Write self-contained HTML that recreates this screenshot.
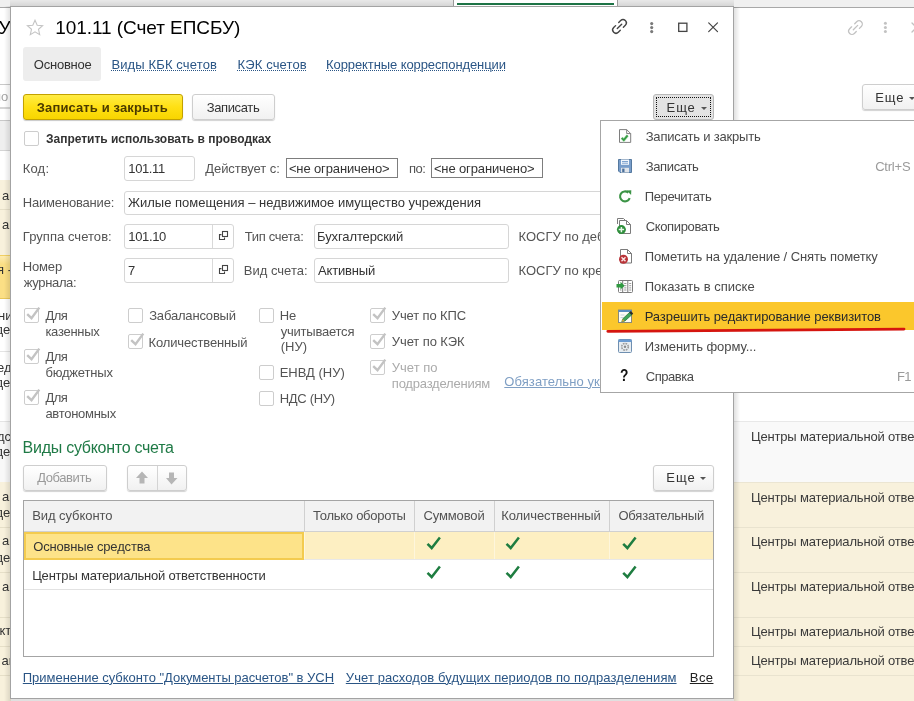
<!DOCTYPE html>
<html lang="ru"><head><meta charset="utf-8"><title>101.11 (Счет ЕПСБУ)</title>
<style>
html,body{margin:0;padding:0}
body{width:914px;height:701px;overflow:hidden;position:relative;background:#fff;font-family:"Liberation Sans",sans-serif;font-size:13px}
div,span{box-sizing:border-box}
.a{position:absolute}
.t{position:absolute;white-space:pre;line-height:1}
.L{position:absolute;left:0;top:0;width:914px;height:701px;will-change:transform}
.dl{text-decoration:underline dotted;text-decoration-thickness:1px;text-underline-offset:1px}
.ul{text-decoration:underline;text-decoration-thickness:1px;text-underline-offset:1px}
.fld{position:absolute;border:1px solid #d6d6d6;border-radius:3px;background:#fff}
.cb{position:absolute;width:15px;height:15px;border:1px solid #cdcdcd;border-radius:2px;background:#fff}
.btn{position:absolute;border:1px solid #cecece;border-radius:3px;background:linear-gradient(#fff,#f1f1f1);box-shadow:0 1px 1px rgba(0,0,0,.18)}
.hl{position:absolute;height:1px;background:#e2e2e2}
</style></head><body>

<!-- ============ background app ============ -->
<div class="a" id="bg" style="left:0;top:0;width:914px;height:701px">
  <!-- top strip -->
  <div class="a" style="left:0;top:0;width:914px;height:7px;background:#f0f0f0"></div>
  <div class="a" style="left:10px;top:0;width:724px;height:6px;background:linear-gradient(rgba(0,0,0,.03),rgba(0,0,0,.11))"></div>
  <div class="a" style="left:453px;top:0;width:165px;height:6px;background:#fff;border-left:1px solid #9a9a9a;border-right:1px solid #9a9a9a"></div>
  <div class="a" style="left:457px;top:3px;width:157px;height:2px;background:#1d7346"></div>
  <div class="a" style="left:0;top:7px;width:914px;height:1px;background:#a8a8a8"></div>
  <!-- left strip -->
  <div class="a" style="left:0;top:84px;width:11px;height:25px;border-top:1px solid #c9c9c9;border-bottom:2px solid #d6d6d6;background:#fff"></div>
  <div class="a" style="left:0;top:120px;width:11px;height:31px;background:#efefef;border-top:1px solid #c8c8c8;border-bottom:1px solid #d4d4d4"></div>
  <div class="a" style="left:0;top:180px;width:11px;height:76px;background:#f8f1dc"></div>
  <div class="a" style="left:0;top:209px;width:11px;height:1px;background:#e6dfc8"></div>
  <div class="a" style="left:0;top:255px;width:11px;height:44px;background:linear-gradient(#fdebb0,#fbdf85 20%,#fbdf85);border-top:1px solid #f1cf62;border-bottom:1px solid #e9c75a"></div>
  <div class="a" style="left:0;top:351px;width:11px;height:1px;background:#e4e4e4"></div>
  <div class="a" style="left:0;top:421px;width:11px;height:61px;background:#f8f8f8;border-top:1px solid #e4e4e4"></div>
  <div class="a" style="left:0;top:482px;width:11px;height:219px;background:#f8f1dc"></div>
  <div class="a" style="left:0;top:527px;width:11px;height:1px;background:#e6dfc8"></div>
  <div class="a" style="left:0;top:572px;width:11px;height:1px;background:#e6dfc8"></div>
  <div class="a" style="left:0;top:617px;width:11px;height:1px;background:#e6dfc8"></div>
  <div class="a" style="left:0;top:646px;width:11px;height:1px;background:#e6dfc8"></div>
  <div class="a" style="left:0;top:675px;width:11px;height:1px;background:#e6dfc8"></div>
  <div class="a" style="left:0;top:0;width:10px;height:701px;overflow:hidden;will-change:transform">
    <div class="t" style="left:-1.500px;top:18px;font-size:19px;color:#000">У</div>
    <div class="t" style="left:-6px;top:90px;color:#a5a5a5">по</div>
    <div class="t" style="left:2px;top:189px;color:#333">а</div>
    <div class="t" style="left:2px;top:218px;color:#333">а</div>
    <div class="t" style="left:-3px;top:263px;color:#333">я -</div>
    <div class="t" style="left:-2px;top:309px;color:#333">ни</div>
    <div class="t" style="left:-4.500px;top:323px;color:#333">де</div>
    <div class="t" style="left:-3px;top:361px;color:#333">ед</div>
    <div class="t" style="left:-4.500px;top:376px;color:#333">де</div>
    <div class="t" style="left:-3px;top:430px;color:#333">дс</div>
    <div class="t" style="left:-4.500px;top:445px;color:#333">де</div>
    <div class="t" style="left:2px;top:490px;color:#333">а</div>
    <div class="t" style="left:-4.500px;top:506px;color:#333">де</div>
    <div class="t" style="left:2px;top:534px;color:#333">а</div>
    <div class="t" style="left:-4.500px;top:551px;color:#333">де</div>
    <div class="t" style="left:2px;top:580px;color:#333">а</div>
    <div class="t" style="left:-0.500px;top:624px;color:#333">кт</div>
    <div class="t" style="left:1.500px;top:654px;color:#333">ав</div>
  </div>
  <!-- right part -->
  <div class="a" style="left:734px;top:421px;width:180px;height:61px;background:#f9f9f9;border-top:1px solid #e8e8e8"></div>
  <div class="a" style="left:734px;top:482px;width:180px;height:219px;background:#f8f1dc;border-top:1px solid #ebe5d2"></div>
  <div class="hl" style="left:734px;top:527px;width:180px;background:#e9e3cf"></div>
  <div class="hl" style="left:734px;top:572px;width:180px;background:#e9e3cf"></div>
  <div class="hl" style="left:734px;top:617px;width:180px;background:#e9e3cf"></div>
  <div class="hl" style="left:734px;top:646px;width:180px;background:#e9e3cf"></div>
  <div class="hl" style="left:734px;top:675px;width:180px;background:#e9e3cf"></div>
  <div class="btn" style="left:862px;top:84px;width:60px;height:26px"></div>
  <div class="a" style="left:909px;top:97px;width:0;height:0;border-left:3px solid transparent;border-right:3px solid transparent;border-top:3px solid #555"></div>
  <svg class="a" style="left:846px;top:18px" width="68" height="20" viewBox="0 0 68 20" fill="none" stroke="#c2c2c2" stroke-width="1.3" stroke-linecap="round">
    <g transform="translate(9.5,9.6) rotate(-45)"><path d="M-2.200 -3.300H-4.950a3.300 3.300 0 0 0 0 6.600H-2.200M2.200 -3.300H4.950a3.300 3.300 0 0 1 0 6.600H2.200M-3.100 0H3.100"/></g>
    <g fill="#c2c2c2" stroke="none"><circle cx="39.4" cy="5.2" r="1.5"/><circle cx="39.4" cy="9.4" r="1.5"/><circle cx="39.4" cy="13.6" r="1.5"/></g>
    <path d="M66 5l4.5 4.5M66 14l4.500-4.500"/>
  </svg>
<div class="L">
<div class="t" style="left:751.0px;top:430.0px;font-size:13px;color:#3a3a3a;letter-spacing:-0.17px;">Центры материальной ответственности</div>
<div class="t" style="left:751.0px;top:490.7px;font-size:13px;color:#3a3a3a;letter-spacing:-0.17px;">Центры материальной ответственности</div>
<div class="t" style="left:751.0px;top:534.5px;font-size:13px;color:#3a3a3a;letter-spacing:-0.17px;">Центры материальной ответственности</div>
<div class="t" style="left:751.0px;top:580.3px;font-size:13px;color:#3a3a3a;letter-spacing:-0.17px;">Центры материальной ответственности</div>
<div class="t" style="left:751.0px;top:624.6px;font-size:13px;color:#3a3a3a;letter-spacing:-0.17px;">Центры материальной ответственности</div>
<div class="t" style="left:751.0px;top:653.6px;font-size:13px;color:#3a3a3a;letter-spacing:-0.17px;">Центры материальной ответственности</div>
<div class="t" style="left:875.3px;top:90.5px;font-size:13px;color:#333;letter-spacing:0.84px;">Еще</div>
</div>
</div>

<!-- ============ dialog ============ -->
<div class="a" style="left:4px;top:6px;width:6px;height:695px;background:linear-gradient(90deg,rgba(0,0,0,0),rgba(0,0,0,.10))"></div>
<div class="a" style="left:734px;top:7px;width:6px;height:694px;background:linear-gradient(90deg,rgba(0,0,0,.12),rgba(0,0,0,0))"></div>
<div class="a" style="left:10px;top:699px;width:724px;height:2px;background:rgba(0,0,0,.12)"></div>
<div class="a" id="dlg" style="left:10px;top:6px;width:724px;height:693px;background:#fff;border:1px solid #a3a3a3"></div>

<!-- star -->
<svg class="a" style="left:26px;top:19px" width="18" height="17" viewBox="0 0 18 17"><path d="M9 1.2l2.2 5 5.400.5-4.100 3.600 1.200 5.300L9 12.800 4.300 15.600l1.200-5.300L1.400 6.700l5.400-.5z" fill="#fff" stroke="#c4c4c4" stroke-width="1.100" stroke-linejoin="miter"/></svg>
<!-- window icons -->
<svg class="a" style="left:608px;top:16px" width="114" height="22" viewBox="0 0 114 22" fill="none" stroke="#444" stroke-width="1.300" stroke-linecap="round">
  <g transform="translate(11.5,10.4) rotate(-45)" stroke="#444" stroke-width="1.400"><path d="M-2.200 -3.300H-4.950a3.300 3.300 0 0 0 0 6.600H-2.200M2.200 -3.300H4.950a3.300 3.300 0 0 1 0 6.600H2.200M-3.100 0H3.100"/></g>
  <g fill="#7a7a7a" stroke="none"><circle cx="43.700" cy="7.600" r="1.550"/><circle cx="43.700" cy="11.600" r="1.550"/><circle cx="43.700" cy="15.600" r="1.550"/></g>
  <rect x="70.700" y="7.200" width="8.200" height="8.200" stroke-linecap="butt"/>
  <path d="M100.700 6.900l8.800 8.800M109.500 6.900l-8.800 8.800" stroke-width="1.200"/>
</svg>

<!-- tab -->
<div class="a" style="left:23px;top:47px;width:78px;height:34px;background:#ededed;border-radius:3px"></div>
<!-- buttons -->
<div class="a" style="left:23px;top:94px;width:160px;height:26px;border:1px solid #c3a100;border-radius:3px;background:linear-gradient(#ffec45,#ffe014 50%,#f8d500);box-shadow:0 1px 1px rgba(0,0,0,.22)"></div>
<div class="btn" style="left:192px;top:94px;width:83px;height:26px"></div>
<div class="a" style="left:653px;top:94px;width:61px;height:26px;border:1px solid #b9b9b9;border-radius:3px;background:#e3e3e3"></div>
<div class="a" style="left:656px;top:97px;width:55px;height:20px;border:1px dotted #111"></div>
<div class="a" style="left:701px;top:107px;width:0;height:0;border-left:3px solid transparent;border-right:3px solid transparent;border-top:3px solid #555"></div>

<!-- checkbox top -->
<div class="cb" style="left:24px;top:131px"></div>

<!-- fields -->
<div class="fld" style="left:124px;top:156px;width:71px;height:25px"></div>
<div class="a" style="left:286px;top:158px;width:112px;height:20px;border:1px solid #7d7d7d;background:#fff"></div>
<div class="a" style="left:431px;top:158px;width:112px;height:20px;border:1px solid #7d7d7d;background:#fff"></div>
<div class="fld" style="left:124px;top:191px;width:500px;height:24px"></div>
<div class="fld" style="left:124px;top:224px;width:110px;height:25px"></div>
<div class="a" style="left:212px;top:225px;width:1px;height:23px;background:#d9d9d9"></div>
<div class="fld" style="left:314px;top:224px;width:195px;height:25px"></div>
<div class="fld" style="left:124px;top:258px;width:110px;height:25px"></div>
<div class="a" style="left:212px;top:259px;width:1px;height:23px;background:#d9d9d9"></div>
<div class="fld" style="left:314px;top:258px;width:195px;height:25px"></div>
<svg class="a" style="left:217px;top:229px" width="13" height="13" viewBox="0 0 13 13" fill="none" stroke="#444" stroke-width="1.100"><rect x="5.500" y="2.500" width="5" height="5"/><path d="M4.500 5.600H2.500V10.500H7.500V8.600"/></svg>
<svg class="a" style="left:217px;top:263px" width="13" height="13" viewBox="0 0 13 13" fill="none" stroke="#444" stroke-width="1.100"><rect x="5.500" y="2.500" width="5" height="5"/><path d="M4.500 5.600H2.500V10.500H7.500V8.600"/></svg>

<!-- checkboxes -->
<div class="cb" style="left:24px;top:308px"></div>
<div class="cb" style="left:24px;top:349px"></div>
<div class="cb" style="left:24px;top:390px"></div>
<div class="cb" style="left:128px;top:308px"></div>
<div class="cb" style="left:128px;top:334px"></div>
<div class="cb" style="left:259px;top:308px"></div>
<div class="cb" style="left:259px;top:365px"></div>
<div class="cb" style="left:259px;top:391px"></div>
<div class="cb" style="left:370px;top:308px"></div>
<div class="cb" style="left:370px;top:334px"></div>
<div class="cb" style="left:370px;top:360px"></div>
<svg class="a" style="left:0;top:0;pointer-events:none" width="914" height="701" viewBox="0 0 914 701" fill="none" stroke="#c3c3c3" stroke-width="2.400">
  <path d="M27.2 314.1L31.5 318.1L39.3 307.6"/>
  <path d="M27.2 355.1L31.5 359.1L39.3 348.6"/>
  <path d="M27.2 396.1L31.5 400.1L39.3 389.6"/>
  <path d="M131.2 340.1L135.5 344.1L143.3 333.6"/>
  <path d="M373.2 314.1L377.5 318.1L385.3 307.6"/>
  <path d="M373.2 340.1L377.5 344.1L385.3 333.6"/>
  <path d="M373.2 366.1L377.5 370.1L385.3 359.6"/>
</svg>

<!-- toolbar 2 -->
<div class="btn" style="left:23px;top:465px;width:84px;height:26px"></div>
<div class="btn" style="left:127px;top:465px;width:60px;height:26px"></div>
<div class="a" style="left:157px;top:466px;width:1px;height:24px;background:#d4d4d4"></div>
<svg class="a" style="left:134px;top:470px" width="46" height="16" viewBox="0 0 46 16" fill="#b6b6b6"><path d="M8 1.500l6 6.500h-3.500v5.500h-5V8H2z"/><path d="M37.500 14.500l6-6.500h-3.500V2.500h-5V8H32z"/></svg>
<div class="btn" style="left:653px;top:465px;width:61px;height:26px"></div>
<div class="a" style="left:700px;top:477px;width:0;height:0;border-left:3px solid transparent;border-right:3px solid transparent;border-top:3px solid #555"></div>

<!-- table -->
<div class="a" style="left:23px;top:500px;width:691px;height:157px;border:1px solid #a4a4a4;background:#fff"></div>
<div class="a" style="left:24px;top:501px;width:689px;height:31px;background:#f2f2f2;border-bottom:1px solid #d0d0d0"></div>
<div class="a" style="left:304px;top:501px;width:1px;height:30px;background:#d0d0d0"></div>
<div class="a" style="left:414px;top:501px;width:1px;height:30px;background:#d0d0d0"></div>
<div class="a" style="left:494px;top:501px;width:1px;height:30px;background:#d0d0d0"></div>
<div class="a" style="left:609px;top:501px;width:1px;height:30px;background:#d0d0d0"></div>
<div class="a" style="left:24px;top:532px;width:689px;height:27px;background:#fdefc2"></div>
<div class="a" style="left:24px;top:532px;width:280px;height:28px;background:#fde389;border:2px solid #f3cb4f"></div>
<div class="a" style="left:304px;top:532px;width:1px;height:27px;background:#fef6dc"></div>
<div class="a" style="left:414px;top:532px;width:1px;height:27px;background:#fef6dc"></div>
<div class="a" style="left:494px;top:532px;width:1px;height:27px;background:#fef6dc"></div>
<div class="a" style="left:609px;top:532px;width:1px;height:27px;background:#fef6dc"></div>
<div class="hl" style="left:304px;top:559px;width:409px;background:#e8e8e8"></div>
<div class="hl" style="left:24px;top:589px;width:689px;background:#e2e2e2"></div>
<svg class="a" style="left:0;top:0;pointer-events:none" width="914" height="701" viewBox="0 0 914 701" fill="none" stroke="#1e7d40" stroke-width="2.500">
  <path d="M427.5 543.8L431.7 548.0L439.9 537.5"/>
  <path d="M427.5 572.8L431.7 577.0L439.9 566.5"/>
  <path d="M506.5 543.8L510.7 548.0L518.9 537.5"/>
  <path d="M506.5 572.8L510.7 577.0L518.9 566.5"/>
  <path d="M623.2 543.8L627.4 548.0L635.6 537.5"/>
  <path d="M623.2 572.8L627.4 577.0L635.6 566.5"/>
</svg>

<div class="L">
<div class="t" style="left:55.2px;top:17.9px;font-size:19px;color:#000;letter-spacing:-0.055px;">101.11 (Счет ЕПСБУ)</div>
<div class="t" style="left:33.8px;top:58.0px;font-size:13px;color:#333;letter-spacing:-0.234px;">Основное</div>
<div class="t dl" style="left:111.4px;top:58.0px;font-size:13px;color:#2a5585;letter-spacing:0.134px;">Виды КБК счетов</div>
<div class="t dl" style="left:237.5px;top:58.0px;font-size:13px;color:#2a5585;letter-spacing:0.137px;">КЭК счетов</div>
<div class="t dl" style="left:326.1px;top:58.0px;font-size:13px;color:#2a5585;letter-spacing:-0.098px;">Корректные корреспонденции</div>
<div class="t" style="left:36.8px;top:100.6px;font-size:13px;color:#4a3a00;font-weight:bold;letter-spacing:0.121px;">Записать и закрыть</div>
<div class="t" style="left:206.7px;top:100.6px;font-size:13px;color:#333;letter-spacing:-0.369px;">Записать</div>
<div class="t" style="left:666.6px;top:101.0px;font-size:13px;color:#333;letter-spacing:0.89px;">Еще</div>
<div class="t" style="left:46.1px;top:133.2px;font-size:12px;color:#333;font-weight:bold;letter-spacing:-0.022px;">Запретить использовать в проводках</div>
<div class="t" style="left:22.7px;top:162.0px;font-size:13px;color:#545454;letter-spacing:0.199px;">Код:</div>
<div class="t" style="left:128.3px;top:162.0px;font-size:13px;color:#343434;letter-spacing:-0.373px;">101.11</div>
<div class="t" style="left:205.2px;top:162.0px;font-size:13px;color:#545454;letter-spacing:-0.044px;">Действует с:</div>
<div class="t" style="left:288.9px;top:162.0px;font-size:13px;color:#343434;letter-spacing:-0.128px;">&lt;не ограничено&gt;</div>
<div class="t" style="left:408.9px;top:162.0px;font-size:13px;color:#545454;letter-spacing:-0.5px;">по:</div>
<div class="t" style="left:433.9px;top:162.0px;font-size:13px;color:#343434;letter-spacing:-0.128px;">&lt;не ограничено&gt;</div>
<div class="t" style="left:22.8px;top:196.0px;font-size:13px;color:#545454;letter-spacing:-0.185px;">Наименование:</div>
<div class="t" style="left:128.0px;top:196.0px;font-size:13px;color:#343434;letter-spacing:-0.005px;">Жилые помещения – недвижимое имущество учреждения</div>
<div class="t" style="left:22.8px;top:230.3px;font-size:13px;color:#545454;letter-spacing:0.047px;">Группа счетов:</div>
<div class="t" style="left:128.3px;top:230.3px;font-size:13px;color:#343434;letter-spacing:-0.366px;">101.10</div>
<div class="t" style="left:244.7px;top:230.3px;font-size:13px;color:#545454;letter-spacing:-0.294px;">Тип счета:</div>
<div class="t" style="left:317.0px;top:230.3px;font-size:13px;color:#343434;letter-spacing:-0.103px;">Бухгалтерский</div>
<div class="t" style="left:518.5px;top:230.3px;font-size:13px;color:#545454;">КОСГУ по дебету:</div>
<div class="t" style="left:22.8px;top:259.8px;font-size:13px;color:#545454;letter-spacing:-0.171px;">Номер</div>
<div class="t" style="left:23.8px;top:275.5px;font-size:13px;color:#545454;letter-spacing:-0.35px;">журнала:</div>
<div class="t" style="left:128.0px;top:264.0px;font-size:13px;color:#343434;">7</div>
<div class="t" style="left:243.7px;top:264.0px;font-size:13px;color:#545454;letter-spacing:0.023px;">Вид счета:</div>
<div class="t" style="left:318.0px;top:264.0px;font-size:13px;color:#343434;letter-spacing:-0.164px;">Активный</div>
<div class="t" style="left:518.5px;top:264.0px;font-size:13px;color:#545454;">КОСГУ по кредиту:</div>
<div class="t" style="left:45.4px;top:309.3px;font-size:13px;color:#545454;letter-spacing:-0.5px;">Для</div>
<div class="t" style="left:45.4px;top:325.0px;font-size:13px;color:#545454;letter-spacing:-0.272px;">казенных</div>
<div class="t" style="left:45.4px;top:350.3px;font-size:13px;color:#545454;letter-spacing:-0.5px;">Для</div>
<div class="t" style="left:45.4px;top:366.0px;font-size:13px;color:#545454;letter-spacing:-0.183px;">бюджетных</div>
<div class="t" style="left:45.4px;top:391.3px;font-size:13px;color:#545454;letter-spacing:-0.5px;">Для</div>
<div class="t" style="left:45.4px;top:407.0px;font-size:13px;color:#545454;letter-spacing:-0.273px;">автономных</div>
<div class="t" style="left:149.2px;top:309.3px;font-size:13px;color:#545454;letter-spacing:-0.18px;">Забалансовый</div>
<div class="t" style="left:148.5px;top:335.5px;font-size:13px;color:#545454;letter-spacing:-0.132px;">Количественный</div>
<div class="t" style="left:279.7px;top:309.3px;font-size:13px;color:#545454;">Не</div>
<div class="t" style="left:280.7px;top:324.8px;font-size:13px;color:#545454;letter-spacing:-0.223px;">учитывается</div>
<div class="t" style="left:280.7px;top:340.3px;font-size:13px;color:#545454;">(НУ)</div>
<div class="t" style="left:279.7px;top:366.0px;font-size:13px;color:#545454;letter-spacing:-0.004px;">ЕНВД (НУ)</div>
<div class="t" style="left:279.7px;top:391.5px;font-size:13px;color:#545454;letter-spacing:-0.31px;">НДС (НУ)</div>
<div class="t" style="left:391.8px;top:309.0px;font-size:13px;color:#545454;letter-spacing:-0.119px;">Учет по КПС</div>
<div class="t" style="left:391.8px;top:335.0px;font-size:13px;color:#545454;letter-spacing:-0.099px;">Учет по КЭК</div>
<div class="t" style="left:391.8px;top:361.0px;font-size:13px;color:#ababab;">Учет по</div>
<div class="t" style="left:391.8px;top:376.6px;font-size:13px;color:#ababab;letter-spacing:-0.211px;">подразделениям</div>
<div class="t ul" style="left:504.3px;top:375.0px;font-size:13px;color:#7f9fc4;letter-spacing:0.077px;">Обязательно указывать</div>
<div class="t" style="left:22.6px;top:439.5px;font-size:16px;color:#1f7a46;letter-spacing:-0.267px;">Виды субконто счета</div>
<div class="t" style="left:37.2px;top:471.4px;font-size:13px;color:#9a9a9a;letter-spacing:-0.411px;">Добавить</div>
<div class="t" style="left:666.3px;top:471.4px;font-size:13px;color:#333;letter-spacing:0.94px;">Еще</div>
<div class="t" style="left:32.2px;top:508.5px;font-size:13px;color:#525252;letter-spacing:-0.061px;">Вид субконто</div>
<div class="t" style="left:313.1px;top:508.5px;font-size:13px;color:#525252;letter-spacing:-0.264px;">Только обороты</div>
<div class="t" style="left:423.4px;top:508.5px;font-size:13px;color:#525252;letter-spacing:-0.105px;">Суммовой</div>
<div class="t" style="left:501.3px;top:508.5px;font-size:13px;color:#525252;letter-spacing:-0.101px;">Количественный</div>
<div class="t" style="left:618.4px;top:508.5px;font-size:13px;color:#525252;letter-spacing:-0.191px;">Обязательный</div>
<div class="t" style="left:33.2px;top:540.0px;font-size:13px;color:#343434;letter-spacing:-0.167px;">Основные средства</div>
<div class="t" style="left:32.2px;top:568.5px;font-size:13px;color:#343434;letter-spacing:-0.203px;">Центры материальной ответственности</div>
<div class="t ul" style="left:22.8px;top:671.2px;font-size:13px;color:#2a5585;letter-spacing:-0.028px;">Применение субконто "Документы расчетов" в УСН</div>
<div class="t ul" style="left:345.8px;top:671.2px;font-size:13px;color:#2a5585;letter-spacing:0.089px;">Учет расходов будущих периодов по подразделениям</div>
<div class="t ul" style="left:689.8px;top:671.2px;font-size:13px;color:#222;letter-spacing:0.415px;">Все</div>
</div>

<!-- ============ popup menu ============ -->
<div class="a" id="menu" style="left:600px;top:120px;width:330px;height:273px;background:#fff;border:1px solid #a6a6a6"></div>
<div class="a" style="left:602px;top:302px;width:312px;height:28px;background:#fbc72c"></div>
<svg class="a" style="left:600px;top:320px;pointer-events:none" width="314" height="16" viewBox="0 0 314 16" fill="none"><path d="M7.800 11.300C100 10.900 200 10.200 304 9.100" stroke="#d5150f" stroke-width="2.800" stroke-linecap="round"/></svg>
<div class="L">
<!-- icon1: doc+check -->
<svg class="a" style="left:617px;top:127px" width="17" height="18" viewBox="0 0 17 18"><path d="M2.500 2.600h7.200l4 4v8.800H2.500z" fill="#fff" stroke="#7e7e7e" stroke-width="1"/><path d="M9.700 2.600v4h4" fill="none" stroke="#7e7e7e" stroke-width="1"/><path d="M4.700 10.900l2.100 2.200 3.800-4.700" fill="none" stroke="#c9ebcc" stroke-width="3.200"/><path d="M4.700 10.900l2.100 2.200 3.800-4.700" fill="none" stroke="#389c46" stroke-width="1.900"/></svg>
<!-- icon2: floppy -->
<svg class="a" style="left:617px;top:158px" width="16" height="16" viewBox="0 0 16 16"><path d="M1.500 1.500h13v13H3l-1.500-1.500z" fill="#789dca" stroke="#55799f" stroke-width="1"/><rect x="4" y="1.500" width="8" height="5.300" fill="#f2f6fb"/><path d="M5 3.500h6M5 5.200h6" stroke="#7ea3cf" stroke-width="1"/><rect x="4" y="9.800" width="8" height="4.700" fill="#e1e5ea"/><rect x="5.200" y="10.600" width="2.300" height="3.500" fill="#4b6f9a"/></svg>
<!-- icon3: refresh -->
<svg class="a" style="left:617px;top:188px" width="17" height="17" viewBox="0 0 17 17"><path d="M11.300 4.600A5 5 0 1 0 12.700 10.200" fill="none" stroke="#3c9446" stroke-width="2.100"/><path d="M9.600 2.500l4.700-.3-.2 4.800z" fill="#3c9446"/></svg>
<!-- icon4: copy -->
<svg class="a" style="left:615px;top:216px" width="19" height="20" viewBox="0 0 19 20"><path d="M2.500 8V2.500h6l1.500 1.500" fill="none" stroke="#7b7b7b" stroke-width="1"/><path d="M4.500 4.500h7l4 4v9h-11z" fill="#fff" stroke="#7b7b7b" stroke-width="1"/><path d="M11.500 4.500v4h4" fill="none" stroke="#7b7b7b" stroke-width="1"/><circle cx="6.400" cy="13.600" r="4.500" fill="#2f8f3c"/><path d="M6.400 10.900v5.400M3.700 13.600h5.400" stroke="#e8f7ea" stroke-width="1.500"/></svg>
<!-- icon5: doc + red x -->
<svg class="a" style="left:617px;top:247px" width="17" height="19" viewBox="0 0 17 19"><path d="M3.500 2.500h7l4 4v9.500h-11z" fill="#fff" stroke="#7b7b7b" stroke-width="1"/><path d="M10.500 2.500v4h4" fill="none" stroke="#7b7b7b" stroke-width="1"/><circle cx="6.500" cy="12.300" r="4.500" fill="#b93338"/><path d="M4.500 10.300l4 4M8.500 10.300l-4 4" stroke="#fbe6e6" stroke-width="1.400"/></svg>
<!-- icon6: show in list -->
<svg class="a" style="left:615px;top:278px" width="20" height="17" viewBox="0 0 20 17"><rect x="3.500" y="2.500" width="14" height="12" rx="1" fill="#fff" stroke="#7b7b7b" stroke-width="1"/><path d="M7.700 2.500v12M12.800 2.500v12" stroke="#7b7b7b" stroke-width="1"/><path d="M9.200 5.500h2.200M9.200 7.700h2.200M9.200 9.900h2.200M9.200 12h2.200M14.200 5.500h2M14.200 7.700h2M14.200 9.900h2M14.200 12h2M5 12h1.500" stroke="#9a9a9a" stroke-width="1"/><path d="M1.500 6h4V3.800l4.200 3.900-4.200 3.900V9.400h-4z" fill="#2f9a40"/></svg>
<!-- icon7: edit form -->
<svg class="a" style="left:616px;top:307px" width="19" height="18" viewBox="0 0 19 18"><rect x="2.500" y="3" width="13" height="12.500" fill="#fdfdf6" stroke="#8a8a7a" stroke-width="1"/><rect x="2.500" y="3" width="13" height="2" fill="#5b8ec2"/><path d="M4.500 8h4M4.500 10.500h3" stroke="#c9d3dc" stroke-width="1"/><path d="M5.800 14.800l1-3 7-6.600 2.300 2.300-7.200 6.500z" fill="#3fa65a" stroke="#2a7a3e" stroke-width=".8"/><path d="M13.200 5.700l1.700-1.600 2.300 2.300-1.700 1.600z" fill="#2b2b2b"/><path d="M5.800 14.800l.9-2.800 1.900 1.900z" fill="#e9a33a"/></svg>
<!-- icon8: change form -->
<svg class="a" style="left:617px;top:338px" width="16" height="16" viewBox="0 0 16 16"><rect x="1.500" y="1.500" width="13" height="13" rx="1" fill="#e7edf2" stroke="#6f8fb0" stroke-width="1"/><rect x="1.500" y="1.500" width="13" height="2.500" fill="#6a9bd2"/><circle cx="8" cy="8.800" r="3.300" fill="none" stroke="#9a9a9a" stroke-width="1.600" stroke-dasharray="1.700 .9"/><circle cx="8" cy="8.800" r="1.200" fill="#8a8a8a"/></svg>
<!-- icon9: ? -->
<div class="t" style="left:620.3px;top:368.300px;font-size:16px;font-weight:bold;color:#111;transform:scaleX(.86);transform-origin:0 0">?</div>

<div class="t" style="left:645.7px;top:129.5px;font-size:13px;color:#4a4a4a;letter-spacing:-0.185px;">Записать и закрыть</div>
<div class="t" style="left:645.7px;top:159.5px;font-size:13px;color:#4a4a4a;letter-spacing:-0.355px;">Записать</div>
<div class="t" style="left:875.2px;top:159.5px;font-size:13px;color:#9a9a9a;letter-spacing:-0.222px;">Ctrl+S</div>
<div class="t" style="left:644.7px;top:189.5px;font-size:13px;color:#4a4a4a;letter-spacing:-0.338px;">Перечитать</div>
<div class="t" style="left:645.7px;top:219.5px;font-size:13px;color:#4a4a4a;letter-spacing:-0.357px;">Скопировать</div>
<div class="t" style="left:644.7px;top:249.5px;font-size:13px;color:#4a4a4a;letter-spacing:-0.092px;">Пометить на удаление / Снять пометку</div>
<div class="t" style="left:644.7px;top:279.5px;font-size:13px;color:#4a4a4a;letter-spacing:0.011px;">Показать в списке</div>
<div class="t" style="left:644.7px;top:309.5px;font-size:13px;color:#2a2a2a;letter-spacing:-0.08px;">Разрешить редактирование реквизитов</div>
<div class="t" style="left:644.7px;top:339.5px;font-size:13px;color:#4a4a4a;letter-spacing:-0.051px;">Изменить форму...</div>
<div class="t" style="left:645.7px;top:369.5px;font-size:13px;color:#4a4a4a;letter-spacing:-0.445px;">Справка</div>
<div class="t" style="left:896.9px;top:369.5px;font-size:13px;color:#9a9a9a;letter-spacing:-0.5px;">F1</div>
</div>
</body></html>
